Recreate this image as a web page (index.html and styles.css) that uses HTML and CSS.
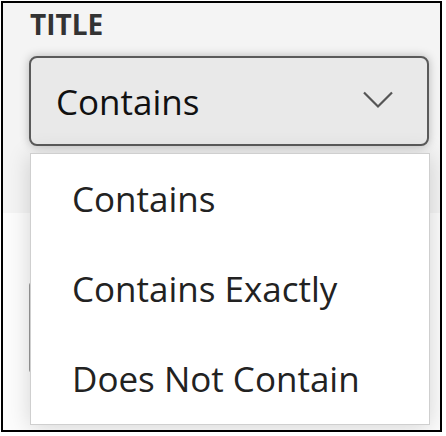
FILE: index.html
```html
<!DOCTYPE html>
<html>
<head>
<meta charset="utf-8">
<link rel="stylesheet" href="styles.css">
</head>
<body>
<div class="frame">
  <div class="panel">
    <div class="label">TITLE</div>
    <div class="select">
      <span class="select-value">Contains</span>
      <svg class="chevron" width="30" height="18" viewBox="0 0 30 18"><path d="M1 1.5 L15 15.5 L29 1.5" fill="none" stroke="#555" stroke-width="2.2"/></svg>
    </div>
  </div>
  <div class="lower">
    <div class="input"></div>
  </div>
  <ul class="menu">
    <li class="item">Contains</li>
    <li class="item">Contains Exactly</li>
    <li class="item">Does Not Contain</li>
  </ul>
</div>
</body>
</html>
```

FILE: styles.css
```css
html, body {
  margin: 0;
  padding: 0;
  background: #ffffff;
}
body {
  font-family: "Open Sans", "Noto Sans", sans-serif;
  padding: 1px 0 0 1px;
}
.frame {
  position: relative;
  box-sizing: border-box;
  width: 441px;
  height: 431px;
  border: 2px solid #000;
  background: #fcfcfc;
  overflow: hidden;
}
.panel {
  background: #f4f4f4;
  height: 210px;
  box-sizing: border-box;
  padding: 2px 12px 0 26px;
}
.label {
  font-size: 28px;
  font-weight: 700;
  color: #333;
  line-height: 38px;
  margin-left: 1px;
}
.select {
  margin-top: 13px;
  height: 90px;
  box-sizing: border-box;
  width: 400px;
  border: 2px solid #5a5a5a;
  border-radius: 8px;
  background: #e9e9e9;
  box-shadow: 0 0 10px rgba(0,0,0,0.25);
  display: flex;
  align-items: center;
  justify-content: space-between;
  padding: 0 34px 0 25px;
}
.select-value {
  font-size: 35px;
  color: #111;
}
.chevron {
  display: block;
  margin-top: -2px;
}
.lower {
  padding: 69px 12px 0 26px;
}
.input {
  width: 400px;
  height: 91px;
  box-sizing: border-box;
  border: 1px solid #999;
  border-radius: 3px;
  background: #fff;
}
.menu {
  position: absolute;
  left: 27px;
  top: 150px;
  width: 398px;
  margin: 0;
  padding: 0;
  list-style: none;
  background: #fff;
  border: 1px solid #cfcfcf;
  box-shadow: 0 2px 22px rgba(0,0,0,0.16);
}
.item {
  height: 90px;
  line-height: 89px;
  font-size: 35px;
  color: #222;
  padding-left: 41px;
}
```
